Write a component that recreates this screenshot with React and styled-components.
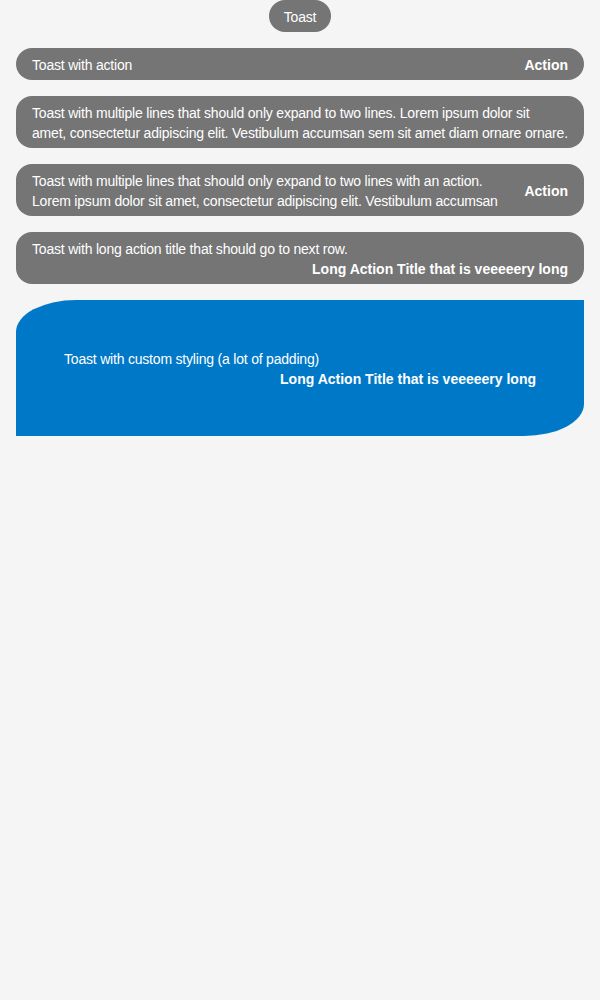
import React from 'react';
import styled, { createGlobalStyle } from 'styled-components';

const GlobalStyle = createGlobalStyle`
  body {
    margin: 0;
    background: #f5f5f5;
    font-family: "Liberation Sans", Arial, sans-serif;
  }
`;

const toasts = [
  { text: 'Toast with action', action: 'Action' },
  { text: 'Toast with multiple lines that should only expand to two lines. Lorem ipsum dolor sit\namet, consectetur adipiscing elit. Vestibulum accumsan sem sit amet diam ornare ornare.' },
  { text: 'Toast with multiple lines that should only expand to two lines with an action. Lorem ipsum dolor sit amet, consectetur adipiscing elit. Vestibulum accumsan sem sit amet diam ornare ornare.', action: 'Action' },
  { text: 'Toast with long action title that should go to next row.', action: 'Long Action Title that is veeeeery long', stacked: true },
];

export default function App() {
  return (
    <Page>
      <GlobalStyle />
      <Pill>Toast</Pill>
      {toasts.map((t, i) => (
        <Toast key={i} $stacked={t.stacked}>
          <Message>{t.text}</Message>
          {t.action && <ActionButton>{t.action}</ActionButton>}
        </Toast>
      ))}
      <Toast $stacked $custom>
        <Message>Toast with custom styling (a lot of padding)</Message>
        <ActionButton>Long Action Title that is veeeeery long</ActionButton>
      </Toast>
    </Page>
  );
}

const Page = styled.div`
  display: flex;
  flex-direction: column;
  align-items: center;
  gap: 16px;
  padding: 0 16px;
`;

const Pill = styled.div`
  background: #757575;
  color: #fff;
  font-size: 14px;
  letter-spacing: -0.2px;
  line-height: 20px;
  padding: 7px 15px 5px;
  border-radius: 16px;
`;

const Toast = styled.div`
  box-sizing: border-box;
  width: 100%;
  display: flex;
  flex-direction: ${p => (p.$stacked ? 'column' : 'row')};
  align-items: ${p => (p.$stacked ? 'stretch' : 'center')};
  gap: ${p => (p.$stacked ? '0' : '20px')};
  background: ${p => (p.$custom ? '#0078c8' : '#757575')};
  color: #fff;
  padding: ${p => (p.$custom ? '49px 48px 47px' : '7px 16px 5px')};
  border-radius: ${p => (p.$custom ? '60px 0 / 32px 0' : '16px')};
  font-size: 14px;
  line-height: 20px;
`;

const Message = styled.div`
  flex: 1;
  max-height: 40px;
  overflow: hidden;
  white-space: pre-line;
  letter-spacing: -0.2px;
`;

const ActionButton = styled.div`
  font-weight: bold;
  white-space: nowrap;
  text-align: right;
`;
